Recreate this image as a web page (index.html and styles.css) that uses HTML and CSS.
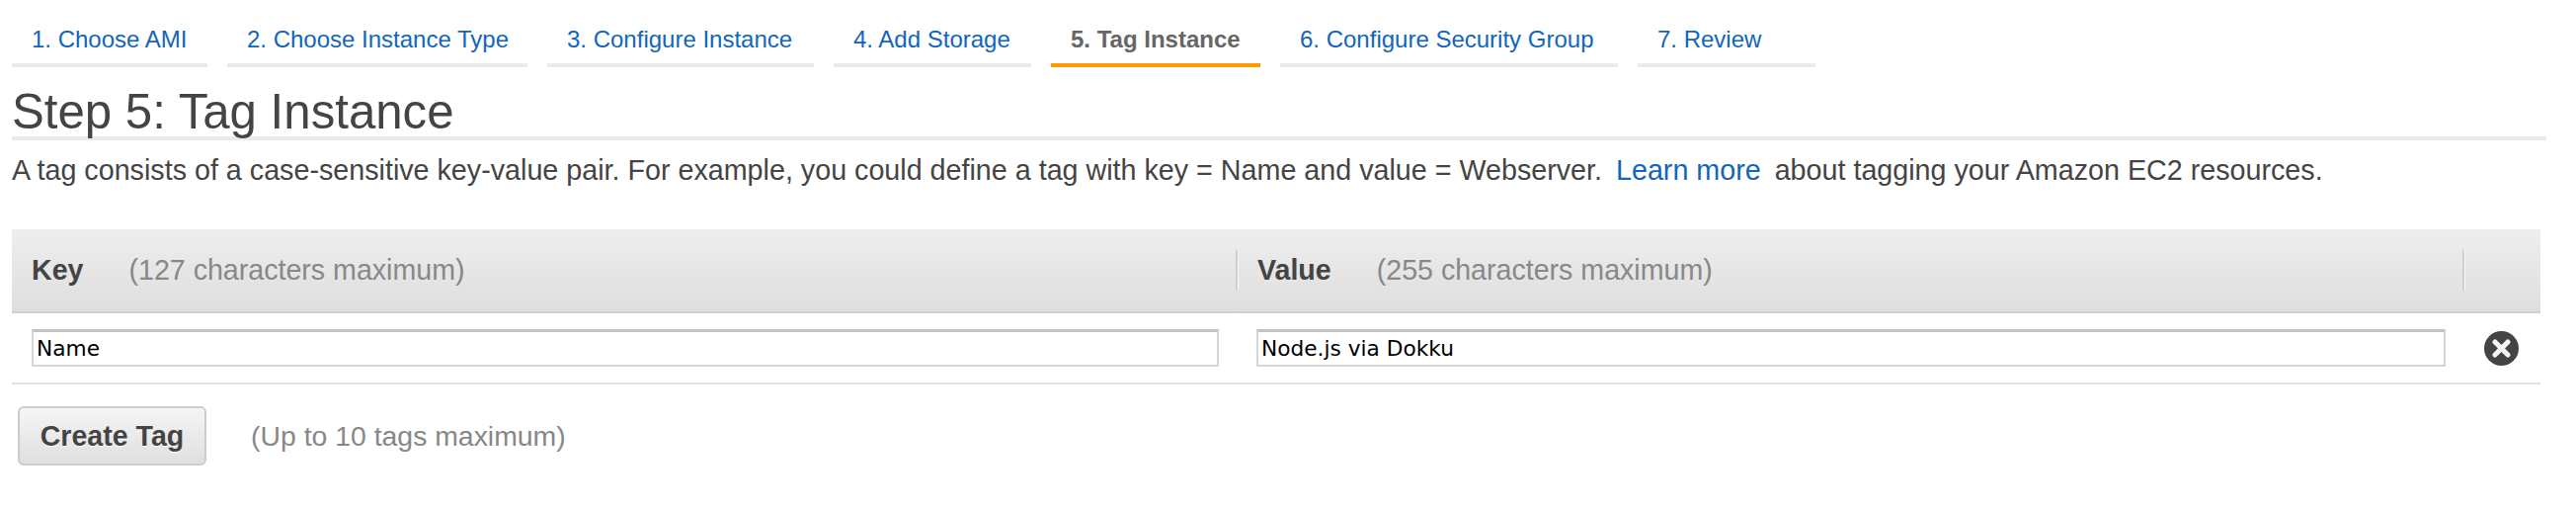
FILE: index.html
```html
<!DOCTYPE html>
<html>
<head>
    <title>Tag Instance</title>
    <link rel="stylesheet" href="styles.css">
</head>
<body>
    <div class="tabs">
        <a class="tab tab-1" href="#">1. Choose AMI</a>
        <a class="tab tab-2" href="#">2. Choose Instance Type</a>
        <a class="tab tab-3" href="#">3. Configure Instance</a>
        <a class="tab tab-4" href="#">4. Add Storage</a>
        <a class="tab tab-5 active" href="#">5. Tag Instance</a>
        <a class="tab tab-6" href="#">6. Configure Security Group</a>
        <a class="tab tab-7" href="#">7. Review</a>
    </div>

    <h1 class="heading">Step 5: Tag Instance</h1>
    <p class="intro">A tag consists of a case-sensitive key-value pair. For example, you could define a tag with key = Name and value = Webserver. <a href="#">Learn more</a> about tagging your Amazon EC2 resources.</p>

    <table class="tag-table">
        <thead>
            <tr>
                <th class="col-key"><span class="cell-head"><b>Key</b><span class="hint">(127 characters maximum)</span></span></th>
                <th class="col-value"><span class="cell-head divided"><b>Value</b><span class="hint">(255 characters maximum)</span></span></th>
                <th class="col-remove"><span class="cell-head divided"></span></th>
            </tr>
        </thead>
        <tbody>
            <tr>
                <td><input class="tag-input" type="text" value="Name"></td>
                <td class="value-cell"><input class="tag-input" type="text" value="Node.js via Dokku"></td>
                <td class="remove-cell">
                    <svg class="remove-icon" width="35" height="35" viewBox="0 0 35 35">
                        <circle cx="17.5" cy="17.5" r="17.5" fill="#444"/>
                        <path d="M11 11L24 24M24 11L11 24" stroke="#f4f4f4" stroke-width="5" stroke-linecap="round"/>
                    </svg>
                </td>
            </tr>
        </tbody>
    </table>

    <div class="actions">
        <button class="create-tag">Create Tag</button>
        <span class="hint">(Up to 10 tags maximum)</span>
    </div>
</body>
</html>
```
FILE: styles.css
```css
body {
    font-family: "Liberation Sans", Arial, sans-serif;
    margin: 0;
    padding: 20px 30px 0 12px;
    background: #fff;
    color: #444;
}

/* Wizard tabs */
.tabs {
    display: flex;
    gap: 20px;
}

.tab {
    box-sizing: border-box;
    height: 48px;
    padding: 6px 0 0 20px;
    border-bottom: 4px solid #eaeaea;
    color: #1166bb;
    font-size: 24px;
    line-height: 28px;
    text-decoration: none;
}

.tab-1 { width: 198px; }
.tab-2 { width: 304px; }
.tab-3 { width: 270px; }
.tab-4 { width: 200px; }
.tab-5 { width: 212px; }
.tab-6 { width: 342px; }
.tab-7 { width: 180px; }

.tab.active {
    border-bottom-color: #ff9900;
    color: #666;
    font-weight: bold;
}

.heading {
    margin: 18px 0 0;
    height: 52px;
    border-bottom: 4px solid #eaeaea;
    font-size: 49.2px;
    font-weight: normal;
    line-height: 54px;
}

.intro {
    margin: 14px 0 0;
    font-size: 28.7px;
    line-height: 32px;
}

.intro a {
    margin: 0 6px;
    color: #1166bb;
    text-decoration: none;
}

/* Tag table */
.tag-table {
    width: 2560px;
    margin-top: 44px;
    border-collapse: collapse;
    table-layout: fixed;
}

.tag-table th {
    height: 83px;
    padding: 0;
    border-bottom: 2px solid #cfcfcf;
    background: linear-gradient(#eeeeee, #dedede);
    font-weight: normal;
    text-align: left;
}

.col-key { width: 1239px; }
.col-value { width: 1242px; }

.cell-head {
    display: flex;
    align-items: center;
    height: 41px;
    padding-left: 20px;
    font-size: 28.6px;
}

.cell-head b {
    margin-right: 46px;
    font-weight: bold;
}

.cell-head.divided {
    border-left: 2px solid #cfcfcf;
    box-shadow: inset 1px 0 0 #f8f8f8;
}

.hint {
    color: #888;
    font-size: 28.6px;
}

.actions .hint {
    font-size: 28.4px;
}

.tag-table td {
    height: 72px;
    padding: 0 0 0 20px;
    border-bottom: 2px solid #e2e2e2;
    box-sizing: border-box;
}

.tag-table td.value-cell {
    padding-left: 21px;
}

.tag-input {
    display: block;
    box-sizing: border-box;
    width: 1202px;
    height: 38px;
    padding: 0 3px;
    border: 2px solid #d6d6d6;
    border-top: 3px solid #c4c4c4;
    background: #fff;
    color: #000;
    font-family: "DejaVu Sans", Verdana, sans-serif;
    font-size: 21.7px;
}

.value-cell .tag-input {
    width: 1204px;
}

.tag-table td.remove-cell {
    padding: 0;
}

.remove-icon {
    display: block;
    margin-left: 22px;
}

/* Create button */
.actions {
    display: flex;
    align-items: center;
    gap: 45px;
    margin: 22px 0 0 6px;
}

.create-tag {
    box-sizing: border-box;
    width: 191px;
    height: 60px;
    border: 2px solid #cccccc;
    border-radius: 6px;
    background: linear-gradient(#f5f5f5, #dfdfdf);
    color: #444;
    font-family: inherit;
    font-size: 28.6px;
    font-weight: bold;
    text-shadow: 0 1px 0 #fff;
}
```
